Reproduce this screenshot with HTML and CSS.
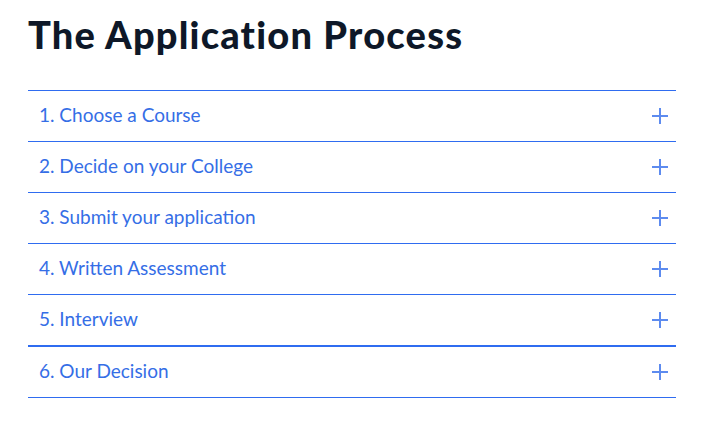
FILE: index.html
```html
<!DOCTYPE html>
<html lang="en">
<head>
    <meta charset="UTF-8">
    <meta name="viewport" content="width=device-width, initial-scale=1.0">
    <title>The Application Process</title>
    <link rel="stylesheet" href="styles.css">
</head>
<body>
    <div class="container">
        <h2>The Application Process</h2>
        <div class="steps">
            <div class="step"><span>1. Choose a Course</span><i class="plus"></i></div>
            <div class="step"><span>2. Decide on your College</span><i class="plus"></i></div>
            <div class="step"><span>3. Submit your application</span><i class="plus"></i></div>
            <div class="step"><span>4. Written Assessment</span><i class="plus"></i></div>
            <div class="step"><span>5. Interview</span><i class="plus"></i></div>
            <div class="step last"><span>6. Our Decision</span><i class="plus"></i></div>
        </div>
    </div>
</body>
</html>
```

FILE: styles.css
```css
body {
    margin: 0;
    background: #fff;
    font-family: Lato, "Liberation Sans", sans-serif;
}

.container {
    width: 648px;
    padding: 11px 0 0 28px;
}

h2 {
    margin: 0 0 33px 0;
    font-size: 38px;
    line-height: 46px;
    font-weight: 900;
    letter-spacing: 1.2px;
    color: #0e1828;
}

.step {
    display: flex;
    justify-content: space-between;
    align-items: center;
    height: 50px;
    padding: 0 8px 0 11px;
    border-top: 1px solid #2f6cf0;
    color: #356ee6;
    font-size: 19px;
}

.step span {
    margin-bottom: 3px;
}

.step.last {
    border-top-width: 2px;
    border-bottom: 1px solid #2f6cf0;
}

.plus {
    position: relative;
    width: 16px;
    height: 16px;
}

.plus::before,
.plus::after {
    content: "";
    position: absolute;
    background: #5d8bef;
}

.plus::before {
    left: 0;
    top: 7.25px;
    width: 16px;
    height: 1.5px;
}

.plus::after {
    left: 7.25px;
    top: 0;
    width: 1.5px;
    height: 16px;
}
```
